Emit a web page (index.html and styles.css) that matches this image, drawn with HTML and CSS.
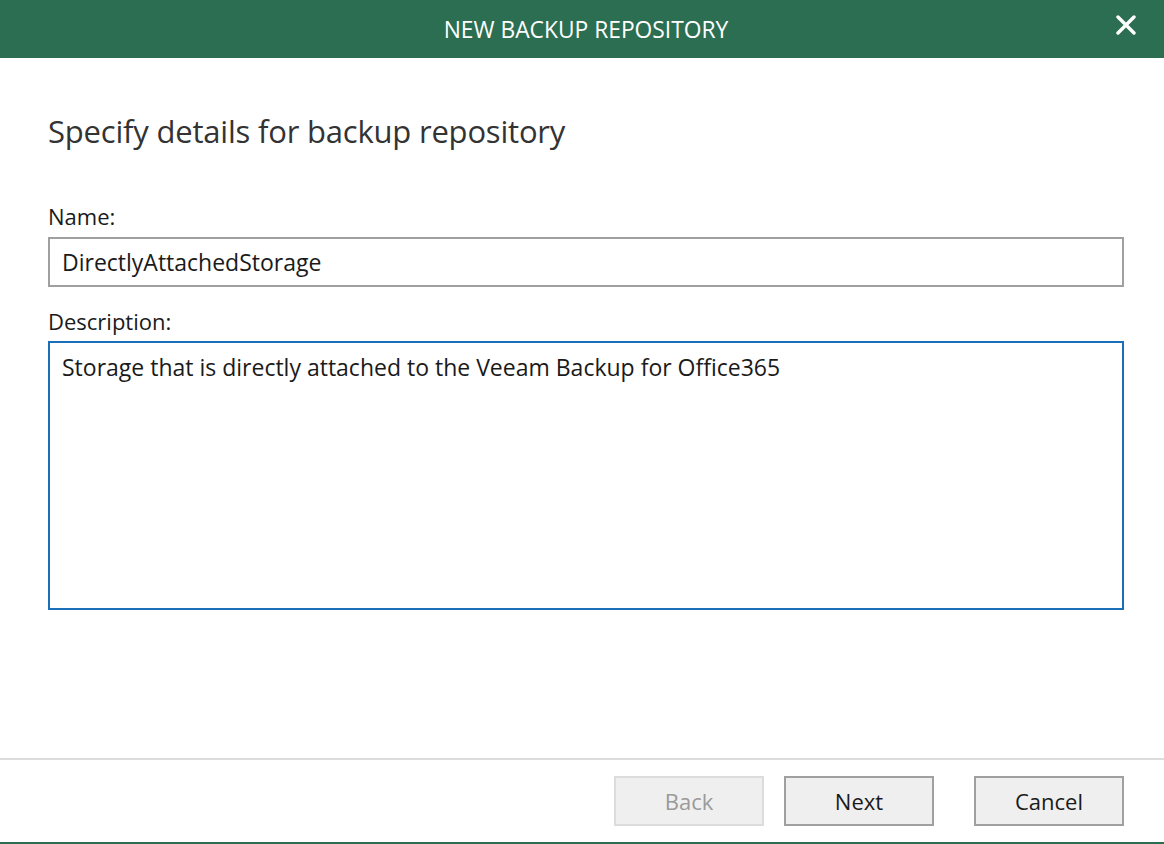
FILE: index.html
```html
<!DOCTYPE html>
<html>
<head>
<meta charset="utf-8">
<link rel="stylesheet" href="styles.css">
</head>
<body>
<div class="dialog">
  <header class="titlebar">
    <span class="title">NEW BACKUP REPOSITORY</span>
    <svg class="close" width="20" height="20" viewBox="0 0 20 20"><path d="M2 2 L18 18 M18 2 L2 18" stroke="#fff" stroke-width="3.4" stroke-linecap="round"/></svg>
  </header>
  <main class="content">
    <h1 class="heading">Specify details for backup repository</h1>
    <label class="label">Name:</label>
    <div class="field">DirectlyAttachedStorage</div>
    <label class="label label-desc">Description:</label>
    <div class="area">Storage that is directly attached to the Veeam Backup for Office365</div>
  </main>
  <footer class="footer">
    <button class="btn btn-disabled">Back</button>
    <button class="btn btn-next">Next</button>
    <button class="btn btn-cancel">Cancel</button>
  </footer>
</div>
</body>
</html>
```
FILE: styles.css
```css
* { box-sizing: border-box; }
html, body { margin: 0; padding: 0; background: #fff; }
body { font-family: "Open Sans", "Noto Sans", sans-serif; color: #1a1a1a; }
.dialog { width: 1164px; height: 844px; display: flex; flex-direction: column; }
.titlebar {
  height: 58px; background: #2b6e52; display: flex; align-items: center; justify-content: center;
  position: relative; flex: none;
}
.title { color: #fff; font-size: 22.8px; margin-left: 8px; }
.close { position: absolute; right: 28px; top: 15px; }
.content { flex: 1; padding: 0 40px 0 48px; display: flex; flex-direction: column; }
.heading { font-weight: 400; font-size: 31px; color: #333; margin: 53px 0 0 0; line-height: 40px; letter-spacing: -0.2px; }
.label { font-size: 22px; line-height: 30px; margin-top: 50px; color: #1a1a1a; }
.label-desc { margin-top: 19px; }
.field {
  margin-top: 6px; height: 50px; border: 2px solid #a0a0a0; padding: 0 12px;
  font-size: 23px; line-height: 46px;
}
.area {
  margin-top: 5px; height: 269px; border: 2px solid #1a6fb8; padding: 9px 12px;
  font-size: 23px; line-height: 30px;
}
.footer {
  flex: none; height: 86px; border-top: 2px solid #dcdcdc; border-bottom: 2px solid #2b6e52;
  display: flex; justify-content: flex-end; align-items: flex-start; padding: 16px 40px 0 0;
}
.btn {
  width: 150px; height: 50px; background: #efefef; border: 2px solid #a0a0a0;
  font-family: "Open Sans", "Noto Sans", sans-serif; font-size: 22px; color: #1a1a1a; padding: 0;
}
.btn-disabled { border-color: #dcdcdc; color: #9a9a9a; }
.btn-next { margin-left: 20px; }
.btn-cancel { margin-left: 40px; }
```
